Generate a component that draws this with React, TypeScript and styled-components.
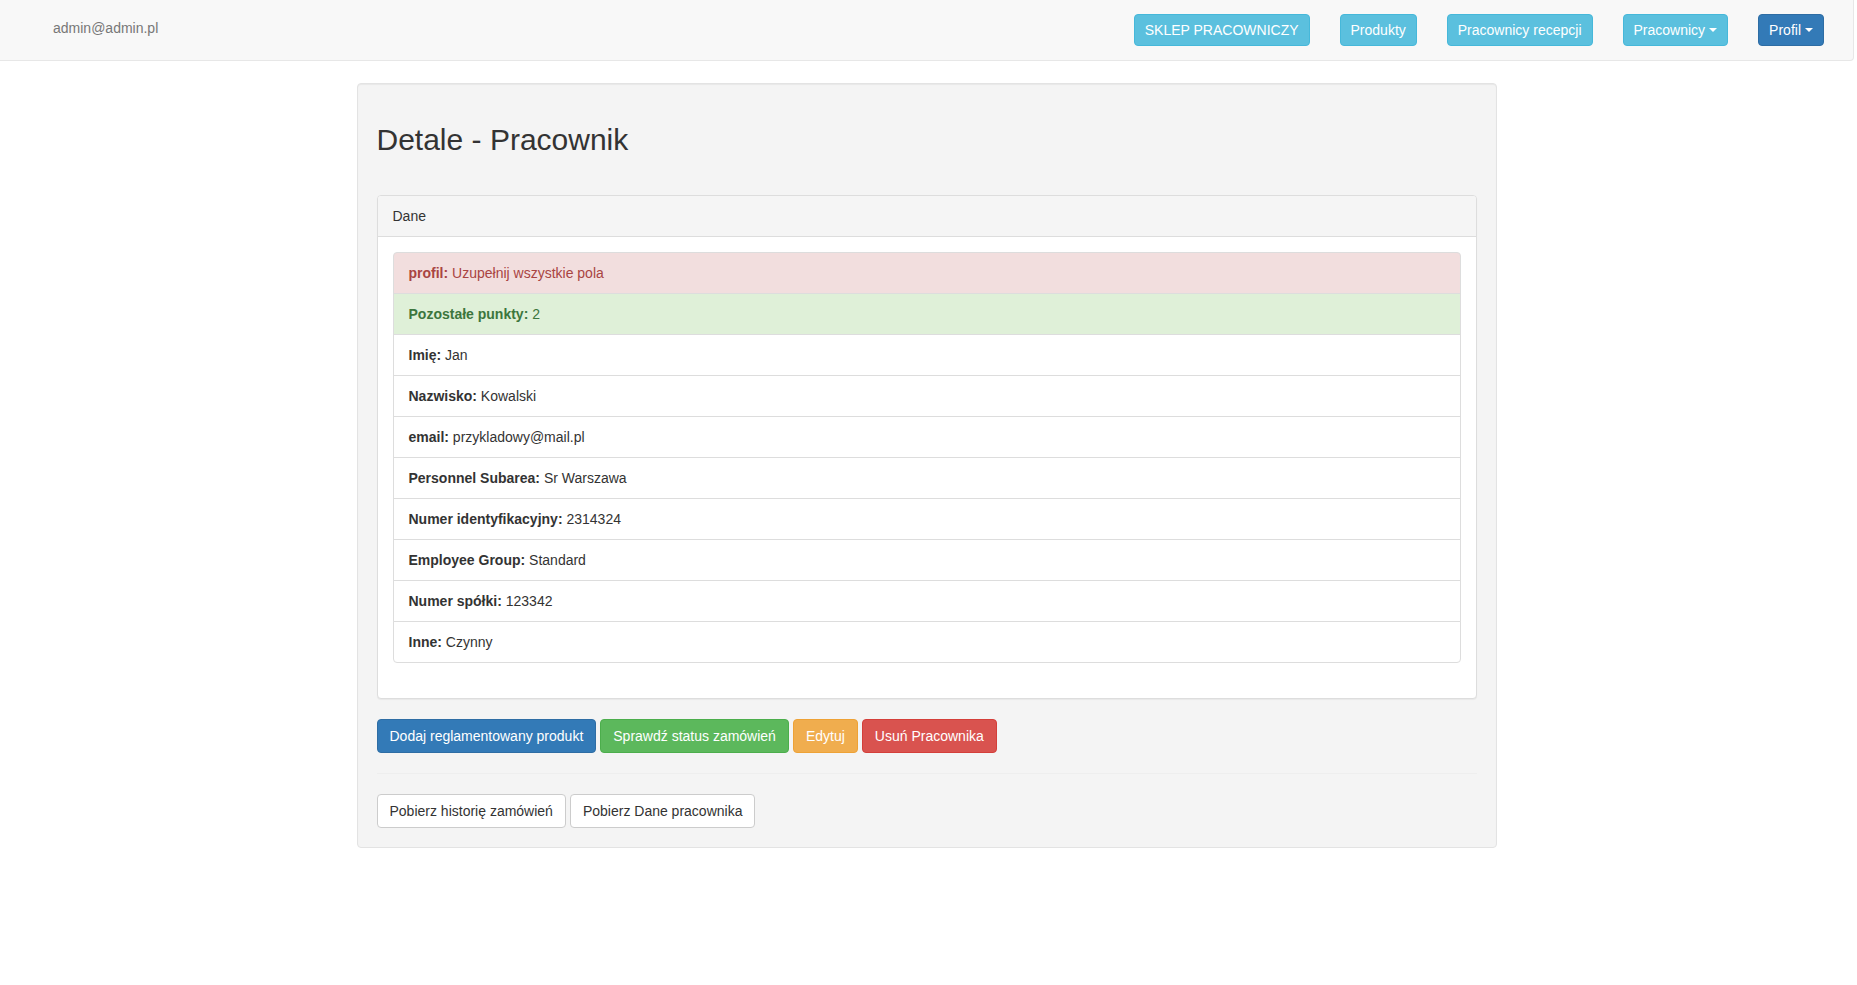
import styled, { createGlobalStyle, css } from 'styled-components';

const GlobalStyle = createGlobalStyle`
  * { box-sizing: border-box; }
  body {
    margin: 0;
    font-family: 'Liberation Sans', Arial, sans-serif;
    font-size: 14px;
    line-height: 1.42857;
    color: #333;
    background: #fff;
  }
`;

type Variant = 'info' | 'primary' | 'success' | 'warning' | 'danger' | 'default';

const palette: Record<Variant, { bg: string; border: string; color: string }> = {
  info: { bg: '#5bc0de', border: '#46b8da', color: '#fff' },
  primary: { bg: '#337ab7', border: '#2e6da4', color: '#fff' },
  success: { bg: '#5cb85c', border: '#4cae4c', color: '#fff' },
  warning: { bg: '#f0ad4e', border: '#eea236', color: '#fff' },
  danger: { bg: '#d9534f', border: '#d43f3a', color: '#fff' },
  default: { bg: '#fff', border: '#ccc', color: '#333' },
};

const rows = [
  { label: 'profil:', value: 'Uzupełnij wszystkie pola', tone: 'danger' },
  { label: 'Pozostałe punkty:', value: '2', tone: 'success' },
  { label: 'Imię:', value: 'Jan' },
  { label: 'Nazwisko:', value: 'Kowalski' },
  { label: 'email:', value: 'przykladowy@mail.pl' },
  { label: 'Personnel Subarea:', value: 'Sr Warszawa' },
  { label: 'Numer identyfikacyjny:', value: '2314324' },
  { label: 'Employee Group:', value: 'Standard' },
  { label: 'Numer spółki:', value: '123342' },
  { label: 'Inne:', value: 'Czynny' },
];

export default function App() {
  return (
    <>
      <GlobalStyle />
      <Navbar>
        <UserText>admin@admin.pl</UserText>
        <NavList>
          <NavButton $variant="info">SKLEP PRACOWNICZY</NavButton>
          <NavButton $variant="info">Produkty</NavButton>
          <NavButton $variant="info">Pracownicy recepcji</NavButton>
          <NavButton $variant="info">
            Pracownicy <Caret />
          </NavButton>
          <NavButton $variant="primary">
            Profil <Caret />
          </NavButton>
        </NavList>
      </Navbar>

      <Well>
        <Title>Detale - Pracownik</Title>
        <Panel>
          <PanelHeading>Dane</PanelHeading>
          <PanelBody>
            <ListGroup>
              {rows.map((r) => (
                <ListItem key={r.label} $tone={r.tone}>
                  <b>{r.label}</b> {r.value}
                </ListItem>
              ))}
            </ListGroup>
          </PanelBody>
        </Panel>

        <ButtonRow>
          <Button $variant="primary">Dodaj reglamentowany produkt</Button>
          <Button $variant="success">Sprawdź status zamówień</Button>
          <Button $variant="warning">Edytuj</Button>
          <Button $variant="danger">Usuń Pracownika</Button>
        </ButtonRow>
        <Divider />
        <ButtonRow>
          <Button $variant="default">Pobierz historię zamówień</Button>
          <Button $variant="default">Pobierz Dane pracownika</Button>
        </ButtonRow>
      </Well>
    </>
  );
}

const Navbar = styled.nav`
  height: 61px;
  margin-right: 3px;
  background: #f8f8f8;
  border-bottom: 1px solid #e7e7e7;
  border-right: 1px solid #e7e7e7;
  border-bottom-right-radius: 4px;
  display: flex;
  align-items: center;
  justify-content: space-between;
  padding: 0 29px 0 53px;
`;

const UserText = styled.span`
  color: #777;
  margin-top: -3px;
`;

const NavList = styled.div`
  display: flex;
  gap: 30px;
  align-items: center;
`;

const buttonBase = css<{ $variant: Variant }>`
  display: inline-flex;
  align-items: center;
  font-family: inherit;
  font-size: 14px;
  line-height: 20px;
  border-radius: 4px;
  cursor: pointer;
  white-space: nowrap;
  background: ${(p) => palette[p.$variant].bg};
  border: 1px solid ${(p) => palette[p.$variant].border};
  color: ${(p) => palette[p.$variant].color};
`;

const NavButton = styled.button<{ $variant: Variant }>`
  ${buttonBase}
  height: 32px;
  padding: 5px 10px;
  margin-top: -1px;
`;

const Caret = styled.span`
  display: inline-block;
  width: 0;
  height: 0;
  margin-left: 4px;
  border-top: 4px solid;
  border-left: 4px solid transparent;
  border-right: 4px solid transparent;
`;

const Well = styled.main`
  width: 1140px;
  margin: 22px auto 0;
  position: relative;
  left: -2px;
  padding: 19px;
  background: #f4f4f4;
  border: 1px solid #e3e3e3;
  border-radius: 4px;
  box-shadow: inset 0 1px 1px rgba(0, 0, 0, 0.05);
`;

const Title = styled.h2`
  font-size: 30px;
  font-weight: 500;
  line-height: 1.1;
  margin: 20px 0 39px;
`;

const Panel = styled.section`
  background: #fff;
  border: 1px solid #ddd;
  border-radius: 4px;
  box-shadow: 0 1px 1px rgba(0, 0, 0, 0.05);
  margin-bottom: 20px;
`;

const PanelHeading = styled.div`
  padding: 11px 15px 9px;
  background: #f5f5f5;
  border-bottom: 1px solid #ddd;
  border-radius: 3px 3px 0 0;
`;

const PanelBody = styled.div`
  padding: 15px;
`;

const ListGroup = styled.div`
  display: flex;
  flex-direction: column;
  margin-bottom: 20px;
`;

const tones: Record<string, { bg: string; color: string }> = {
  danger: { bg: '#f2dede', color: '#a94442' },
  success: { bg: '#dff0d8', color: '#3c763d' },
};

const ListItem = styled.div<{ $tone?: string }>`
  padding: 11px 15px 9px;
  border: 1px solid #ddd;
  margin-bottom: -1px;
  background: ${(p) => (p.$tone ? tones[p.$tone].bg : '#fff')};
  color: ${(p) => (p.$tone ? tones[p.$tone].color : '#333')};

  &:first-child {
    border-radius: 4px 4px 0 0;
  }
  &:last-child {
    margin-bottom: 0;
    border-radius: 0 0 4px 4px;
  }
`;

const ButtonRow = styled.div`
  display: flex;
  gap: 4px;
`;

const Button = styled.button<{ $variant: Variant }>`
  ${buttonBase}
  height: 34px;
  padding: 6px 12px;
`;

const Divider = styled.hr`
  margin: 20px 0;
  border: 0;
  border-top: 1px solid #eee;
`;
